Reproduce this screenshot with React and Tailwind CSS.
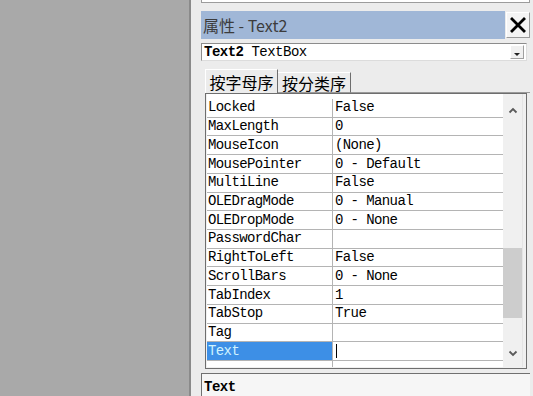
import React from "react";

const rows = [
  ["Locked", "False"],
  ["MaxLength", "0"],
  ["MouseIcon", "(None)"],
  ["MousePointer", "0 - Default"],
  ["MultiLine", "False"],
  ["OLEDragMode", "0 - Manual"],
  ["OLEDropMode", "0 - None"],
  ["PasswordChar", ""],
  ["RightToLeft", "False"],
  ["ScrollBars", "0 - None"],
  ["TabIndex", "1"],
  ["TabStop", "True"],
  ["Tag", ""],
  ["Text", "", true],
  ["", ""],
];

const mono = { fontFamily: '"Liberation Mono", "DejaVu Sans Mono", monospace' };

function Chevron({ up }) {
  return (
    <svg width="10" height="7" viewBox="0 0 10 7">
      <polyline
        points={up ? "1.5,5.5 5,2 8.5,5.5" : "1.5,1.5 5,5 8.5,1.5"}
        fill="none"
        stroke="#5a5a5a"
        strokeWidth="1.8"
      />
    </svg>
  );
}

export default function App() {
  return (
    <div className="w-[533px] h-[396px] flex overflow-hidden bg-[#a9a9a9]">
      <div className="w-[189px] shrink-0 bg-[#a9a9a9]" />
      <div className="w-[2px] shrink-0 bg-[#8a8a8a]" />
      <div className="flex-1 min-w-0 bg-[#ececec] flex flex-col pl-[10px] pr-[3px]">
        {/* stub of box above */}
        <div className="h-[3px] shrink-0 bg-white border-x border-b border-[#9c9c9c]" />

        {/* title bar */}
        <div className="h-[28px] shrink-0 mt-[8px] flex">
          <div
            className="flex-1 bg-[#a0b7d7] flex items-center pl-[2px] text-[16px] text-[#3c3c3c]"
            style={{ fontFamily: '"Noto Sans CJK SC", "Noto Sans", sans-serif' }}
          >
            属性 - Text2
          </div>
          <div className="w-[24px] h-[26px] self-center ml-[1px] bg-[#f4f4f4] border-t border-l border-white border-r border-b border-r-[#9a9a9a] border-b-[#9a9a9a] flex items-center justify-center">
            <svg width="16" height="16" viewBox="0 0 16 16">
              <path d="M2 2 L14 14 M14 2 L2 14" stroke="#000" strokeWidth="2.8" strokeLinecap="square" />
            </svg>
          </div>
        </div>

        {/* combobox */}
        <div className="h-[18px] shrink-0 mt-[4px] mr-[3px] bg-white border border-[#8c8c8c] border-b-[#dcdcdc] border-r-[#dcdcdc] flex items-center">
          <div className="flex-1 pl-[2px] text-[14px] tracking-[-0.5px] text-black leading-none" style={mono}>
            <span className="font-bold">Text2</span> TextBox
          </div>
          <div className="w-[14px] h-[14px] mr-[2px] bg-[#f0f0f0] border border-white border-r-[#a0a0a0] border-b-[#a0a0a0] flex items-end justify-center pb-[2px]">
            <svg width="6" height="3" viewBox="0 0 6 3">
              <polygon points="0,0 6,0 3,3" fill="#222" />
            </svg>
          </div>
        </div>

        {/* tabs */}
        <div
          className="h-[24px] shrink-0 mt-[8px] flex items-start text-[16px] text-black"
          style={{ fontFamily: '"Noto Sans CJK SC", "Noto Sans", sans-serif' }}
        >
          <div className="ml-[4px] w-[73px] h-[24px] border-t border-l border-white border-r border-r-[#6e6e6e] flex items-center justify-center">
            按字母序
          </div>
          <div className="w-[73px] h-[21px] mt-[3px] border-t border-white border-r border-r-[#6e6e6e] border-b border-b-[#9a9a9a] flex items-center justify-center">
            按分类序
          </div>
          <div className="flex-1 self-end border-b border-[#9a9a9a]" />
        </div>

        {/* property grid */}
        <div className="h-[276px] shrink-0 ml-[4px] mr-[3px] border border-[#6e6e6e] bg-[#f0f0f0] flex pl-[1px] pb-[1px] pr-[3px]">
          <div className="flex-1 min-w-0 bg-white overflow-hidden pt-[5px] text-[14px] tracking-[-0.6px] text-black" style={mono}>
            {rows.map(([name, value, sel], i) => (
              <div key={i} className="h-[18.72px] flex border-b border-[#b4b4b4]">
                <div
                  className={
                    "w-[126px] shrink-0 border-r border-[#b4b4b4] pl-[1px] flex items-center whitespace-nowrap " +
                    (sel ? "bg-[#3d8fe6] text-[#cff3ff]" : "")
                  }
                >
                  {name}
                </div>
                <div className="flex-1 pl-[2px] flex items-center whitespace-nowrap">
                  {sel ? <div className="w-px h-[14px] bg-black ml-[1px]" /> : value}
                </div>
              </div>
            ))}
          </div>
          <div className="w-[20px] shrink-0 flex flex-col bg-[#f0f0f0] border-r border-[#e4e4e4]">
            <div className="h-[32px] flex items-center justify-center">
              <Chevron up />
            </div>
            <div className="h-[122px]" />
            <div className="h-[70px] bg-[#cdcdcd]" />
            <div className="flex-1" />
            <div className="h-[28px] flex items-center justify-center">
              <Chevron />
            </div>
          </div>
        </div>

        {/* description */}
        <div className="flex-1 mt-[4px] bg-[#f6f6f6] border-t border-l border-[#707070] pl-[2px] pt-[6px]">
          <div className="text-[14px] font-bold tracking-[-0.5px] text-black leading-none" style={mono}>
            Text
          </div>
        </div>
      </div>
    </div>
  );
}
